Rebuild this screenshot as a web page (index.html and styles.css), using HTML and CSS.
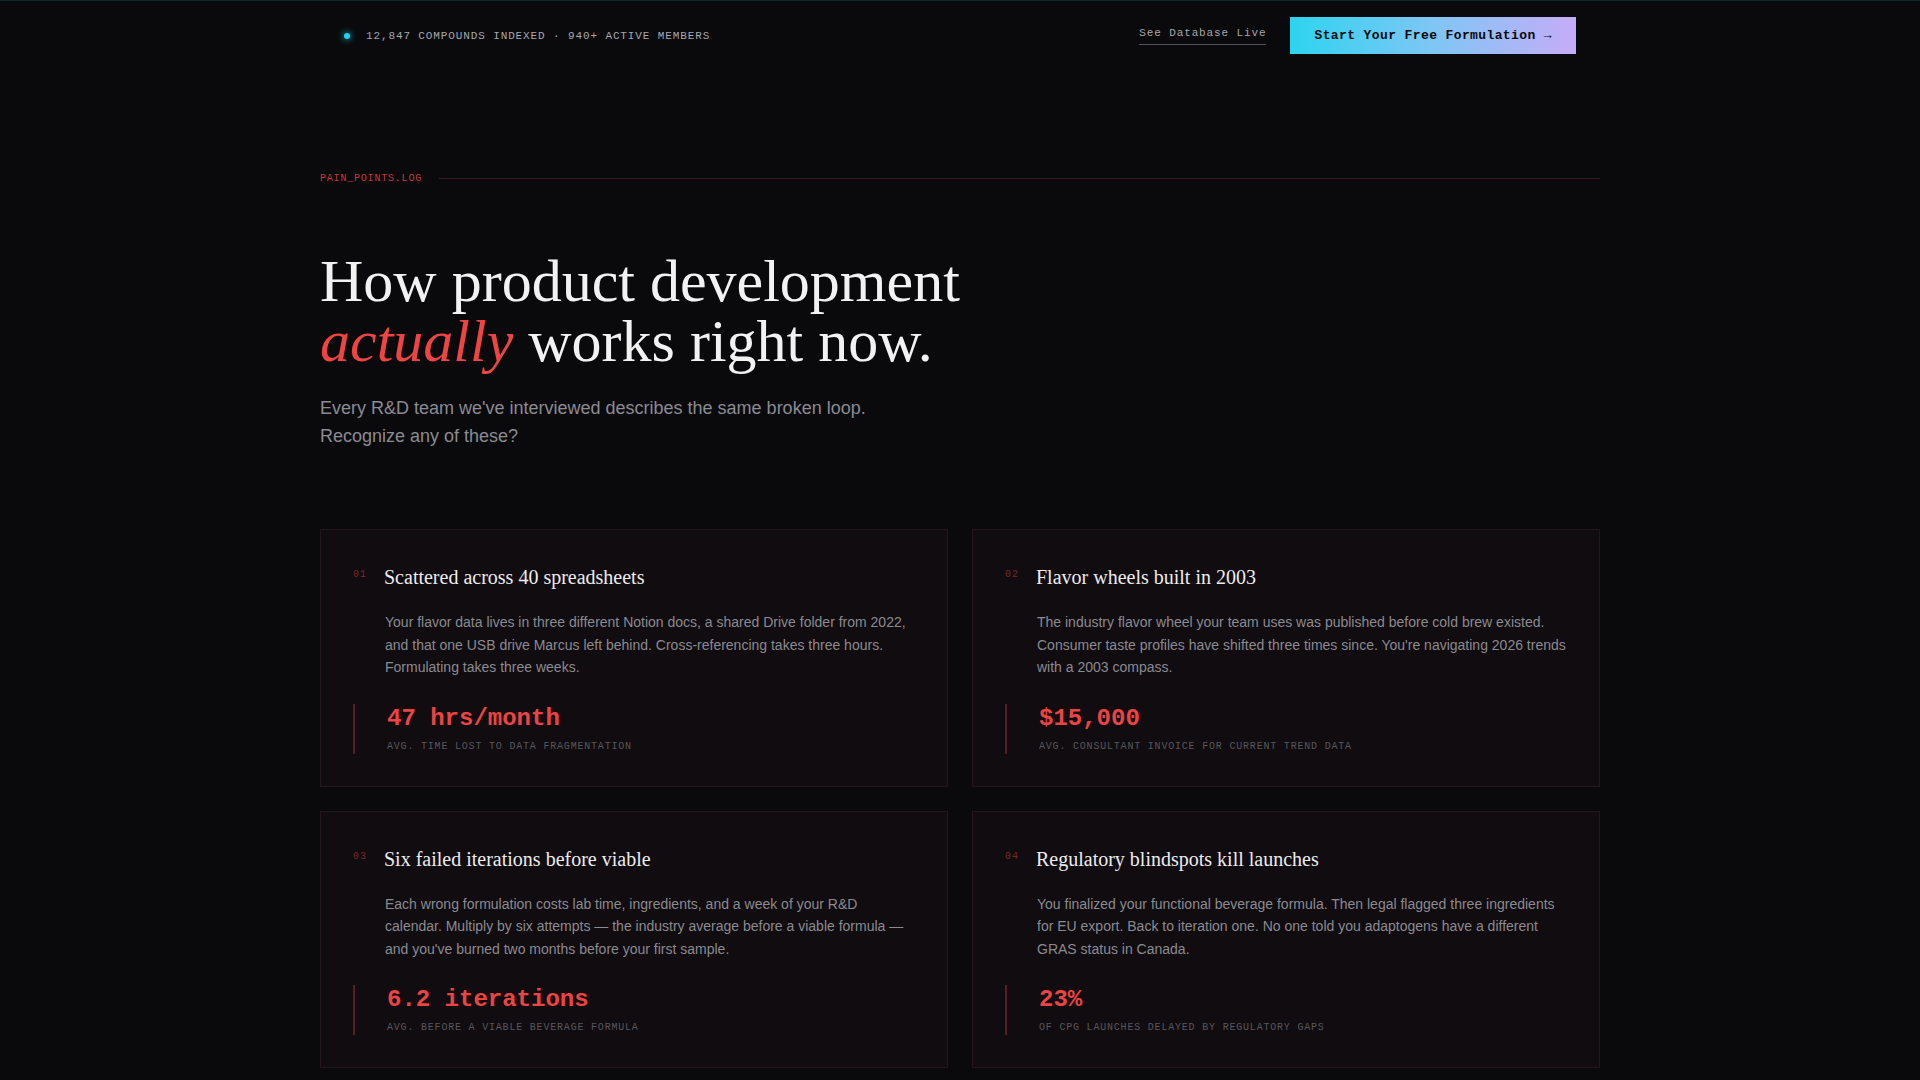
FILE: index.html
```html
<!DOCTYPE html>
<html lang="en">
<head>
<meta charset="utf-8">
<title>Pain points</title>
<link rel="stylesheet" href="styles.css">
</head>
<body>
<header class="topbar">
  <div class="status">
    <span class="dot"></span>
    <span class="status-text">12,847 COMPOUNDS INDEXED · 940+ ACTIVE MEMBERS</span>
  </div>
  <nav class="actions">
    <a class="link" href="#">See Database Live</a>
    <a class="cta" href="#">Start Your Free Formulation →</a>
  </nav>
</header>

<main class="section">
  <div class="eyebrow">
    <span class="eyebrow-text">PAIN_POINTS.LOG</span>
    <span class="eyebrow-line"></span>
  </div>

  <h1 class="headline">How product development<br><em>actually</em> works right now.</h1>
  <p class="lede">Every R&amp;D team we've interviewed describes the same broken loop. Recognize any of these?</p>

  <div class="cards">
    <article class="card">
      <span class="num">01</span>
      <h3 class="title">Scattered across 40 spreadsheets</h3>
      <p class="body">Your flavor data lives in three different Notion docs, a shared Drive folder from 2022, and that one USB drive Marcus left behind. Cross-referencing takes three hours. Formulating takes three weeks.</p>
      <div class="stat">
        <div class="stat-value">47 hrs/month</div>
        <div class="stat-label">AVG. TIME LOST TO DATA FRAGMENTATION</div>
      </div>
    </article>
    <article class="card">
      <span class="num">02</span>
      <h3 class="title">Flavor wheels built in 2003</h3>
      <p class="body">The industry flavor wheel your team uses was published before cold brew existed. Consumer taste profiles have shifted three times since. You're navigating 2026 trends with a 2003 compass.</p>
      <div class="stat">
        <div class="stat-value">$15,000</div>
        <div class="stat-label">AVG. CONSULTANT INVOICE FOR CURRENT TREND DATA</div>
      </div>
    </article>
    <article class="card">
      <span class="num">03</span>
      <h3 class="title">Six failed iterations before viable</h3>
      <p class="body">Each wrong formulation costs lab time, ingredients, and a week of your R&amp;D calendar. Multiply by six attempts — the industry average before a viable formula — and you've burned two months before your first sample.</p>
      <div class="stat">
        <div class="stat-value">6.2 iterations</div>
        <div class="stat-label">AVG. BEFORE A VIABLE BEVERAGE FORMULA</div>
      </div>
    </article>
    <article class="card">
      <span class="num">04</span>
      <h3 class="title">Regulatory blindspots kill launches</h3>
      <p class="body">You finalized your functional beverage formula. Then legal flagged three ingredients for EU export. Back to iteration one. No one told you adaptogens have a different GRAS status in Canada.</p>
      <div class="stat">
        <div class="stat-value">23%</div>
        <div class="stat-label">OF CPG LAUNCHES DELAYED BY REGULATORY GAPS</div>
      </div>
    </article>
  </div>
</main>
</body>
</html>
```

FILE: styles.css
```css
* { box-sizing: border-box; }

html, body {
  margin: 0;
  padding: 0;
  background: #0a0a0c;
}

body {
  border-top: 1px solid #10262c;
  color: #e8e8ea;
  font-family: "Liberation Sans", Arial, sans-serif;
}

.topbar {
  width: 1280px;
  margin: 0 auto;
  padding: 16px 24px;
  display: flex;
  align-items: center;
  justify-content: space-between;
}

.status {
  display: flex;
  align-items: center;
  gap: 16px;
}

.dot {
  width: 6px;
  height: 6px;
  border-radius: 50%;
  background: #22d3ee;
  box-shadow: 0 0 6px 1px rgba(34, 211, 238, 0.6);
}

.status-text {
  font-family: "Liberation Mono", monospace;
  font-size: 11px;
  letter-spacing: 0.08em;
  color: #a6a6ae;
  line-height: 14px;
}

.actions {
  display: flex;
  align-items: center;
  gap: 24px;
}

.link {
  font-family: "Liberation Mono", monospace;
  font-size: 11px;
  letter-spacing: 0.08em;
  line-height: 14px;
  color: #a6a6ae;
  text-decoration: none;
  padding-bottom: 4px;
  border-bottom: 1px solid #52525b;
}

.cta {
  font-family: "Liberation Mono", monospace;
  font-size: 13px;
  font-weight: bold;
  letter-spacing: 0.03em;
  line-height: 15px;
  color: #0a0a0f;
  text-decoration: none;
  white-space: nowrap;
  padding: 11px 24px;
  background: linear-gradient(90deg, #2dd4ef 0%, #7fc6f4 50%, #c6acf8 100%);
}

.section {
  width: 1280px;
  margin: 0 auto;
  padding: 101px 0 40px;
}

.eyebrow {
  display: flex;
  align-items: center;
  gap: 17px;
}

.eyebrow-text {
  font-family: "Liberation Mono", monospace;
  font-size: 10px;
  letter-spacing: 0.08em;
  line-height: 15px;
  color: #c8383c;
}

.eyebrow-line {
  flex: 1;
  height: 1px;
  background: #3b1a1e;
}

.headline {
  margin: 65px 0 0;
  font-family: "Liberation Serif", "Times New Roman", serif;
  font-weight: normal;
  font-size: 60px;
  line-height: 60px;
  color: #f2f2f3;
}

.headline em {
  color: #ef4444;
  font-style: italic;
}

.lede {
  margin: 23px 0 0;
  max-width: 600px;
  font-size: 18px;
  line-height: 28px;
  color: #8b8b93;
}

.cards {
  margin-top: 79px;
  display: grid;
  grid-template-columns: 1fr 1fr;
  gap: 24px;
}

.card {
  background: #110c0f;
  border: 1px solid #271619;
  padding: 34px 32px 32px;
  display: grid;
  grid-template-columns: 14px 1fr;
  column-gap: 17px;
  align-items: start;
}

.num {
  font-family: "Liberation Mono", monospace;
  font-size: 10px;
  letter-spacing: 0.1em;
  line-height: 16px;
  padding-top: 3px;
  color: #722a30;
}

.title {
  margin: 0;
  font-family: "Liberation Serif", "Times New Roman", serif;
  font-weight: normal;
  font-size: 20px;
  line-height: 26px;
  color: #ececee;
}

.body {
  grid-column: 2;
  margin: 21px 0 0 1px;
  font-size: 14px;
  line-height: 22.5px;
  color: #8a8a91;
}

.stat {
  grid-column: 1 / -1;
  margin-top: 25px;
  border-left: 2px solid #5a1d21;
  padding-left: 32px;
}

.stat-value {
  font-family: "Liberation Mono", monospace;
  font-weight: bold;
  font-size: 24px;
  line-height: 29px;
  color: #ec4444;
}

.stat-label {
  margin-top: 6px;
  font-family: "Liberation Mono", monospace;
  font-size: 10px;
  letter-spacing: 0.08em;
  line-height: 15px;
  color: #57575e;
}
```
